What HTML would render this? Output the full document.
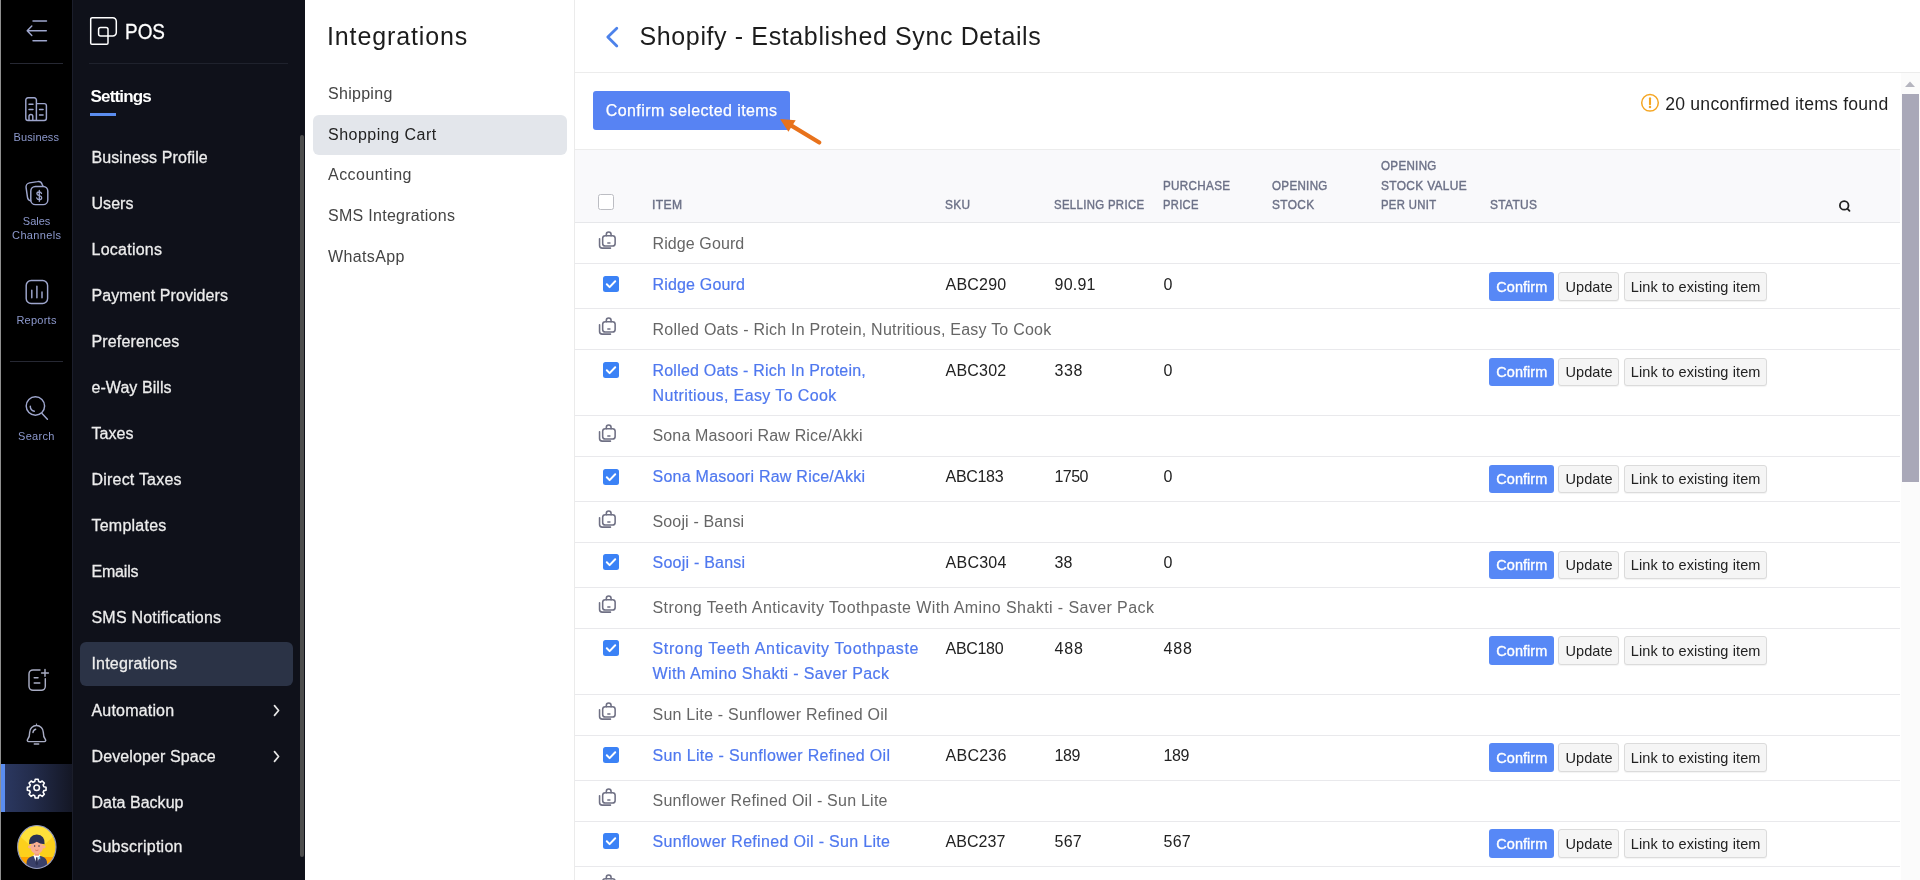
<!DOCTYPE html>
<html lang="en"><head><meta charset="utf-8"><title>Shopify - Established Sync Details</title>
<style>
*{box-sizing:border-box;margin:0;padding:0}
html,body{width:1920px;height:880px;overflow:hidden;background:#fff}
body{font-family:"Liberation Sans",sans-serif;position:relative;color:#222;will-change:transform}
.t{position:absolute;white-space:nowrap;display:block}
.abs{position:absolute}
#rail{position:absolute;left:0;top:0;width:72px;height:880px;background:#000}
#side{position:absolute;left:72px;top:0;width:233px;height:880px;background:#0f111a;border-left:1px solid #1b1e2b}
#panel{position:absolute;left:305px;top:0;width:270px;height:880px;background:#fff;border-right:1px solid #ebebeb}
#main{position:absolute;left:575px;top:0;width:1345px;height:880px;background:#fff}
.hl{position:absolute;height:1px;background:#ececec}
svg{position:absolute;overflow:visible}
.btn{position:absolute;border-radius:3px}
.btn.g{background:#f5f5f5;border:1px solid #dbdbdb;box-shadow:0 1px 1px rgba(0,0,0,.05)}

</style></head>
<body>
<div id="rail"></div>
<div id="side"></div>
<div id="panel"></div>
<div id="main"></div>
<div class="abs" style="left:0;top:0;width:1px;height:880px;background:#8f8f8f"></div>
<svg style="left:0;top:0" width="72" height="72" viewBox="0 0 72 72" fill="none" stroke="#9ea6cd" stroke-width="1.45" stroke-linecap="round" stroke-linejoin="round"><path d="M33 21h13.5M27.3 30.8h19M33 40.7h13.5M31.8 26l-4.6 4.8 4.6 4.8"/></svg>
<div class="abs" style="left:10px;top:63px;width:53px;height:1px;background:#262833"></div>
<svg style="left:0;top:80px" width="72" height="72" viewBox="0 0 72 72" fill="none" stroke="#9ea6cd" stroke-width="1.45" stroke-linecap="round" stroke-linejoin="round"><path d="M25.8 38.2v-18.2a2.2 2.2 0 0 1 2.2 -2.2h6.2a2.2 2.2 0 0 1 2.2 2.2v20.4M36.4 23.6h7.8a2.2 2.2 0 0 1 2.2 2.2v12.4a2.2 2.2 0 0 1 -2.2 2.2h-16.2a2.2 2.2 0 0 1 -2.2 -2.2M29 24.2h4M29 29.5h4M39.5 29.5h3.6M39.5 35h3.6M29 40v-3.6a1.9 1.9 0 0 1 3.8 0v3.6"/></svg>
<span class="t " style="letter-spacing:0.123px;left:13.50px;top:130.25px;font-size:11px;line-height:14px;color:#8c98cc;">Business</span>
<svg style="left:0;top:168px" width="72" height="72" viewBox="0 0 72 72" fill="none" stroke="#9ea6cd" stroke-width="1.45" stroke-linecap="round" stroke-linejoin="round"><rect x="30.8" y="18.4" width="17" height="18.2" rx="4.6"/><path d="M43 18.2l-.9-2a4 4 0 0 0 -4.6 -2.6l-8 1.3a4.2 4.2 0 0 0 -3.4 4.8l1.4 9.6a4.4 4.4 0 0 0 3.2 3.6"/><path stroke-width="1.3" d="M41.500 25.500c-.3-1-1.200-1.500-2.300-1.500-1.300 0-2.300.7-2.300 1.800 0 2.500 4.800 1.300 4.800 3.900 0 1.200-1.100 1.900-2.400 1.900-1.300 0-2.300-.6-2.600-1.700M39.300 22.300v11"/></svg>
<span class="t " style="letter-spacing:-0.008px;left:22.80px;top:214.25px;font-size:11px;line-height:14px;color:#8c98cc;">Sales</span>
<span class="t " style="letter-spacing:0.359px;left:12.10px;top:228.25px;font-size:11px;line-height:14px;color:#8c98cc;">Channels</span>
<svg style="left:0;top:268px" width="72" height="72" viewBox="0 0 72 72" fill="none" stroke="#9ea6cd" stroke-width="1.45" stroke-linecap="round" stroke-linejoin="round"><rect x="26.2" y="12.5" width="21.4" height="23" rx="5"/><path d="M31.8 22.3v7.4M36.9 18.2v11.5M42 24v5.7"/></svg>
<span class="t " style="letter-spacing:0.245px;left:16.40px;top:313.25px;font-size:11px;line-height:14px;color:#8c98cc;">Reports</span>
<div class="abs" style="left:10px;top:361px;width:53px;height:1px;background:#262833"></div>
<svg style="left:0;top:380px" width="72" height="72" viewBox="0 0 72 72" fill="none" stroke="#9ea6cd" stroke-width="1.45" stroke-linecap="round" stroke-linejoin="round"><circle cx="35.4" cy="26" r="9.2"/><path d="M42 33.6l5.4 5.6M30.3 26.2a5 5 0 0 0 4 5"/></svg>
<span class="t " style="letter-spacing:0.288px;left:18.10px;top:429.25px;font-size:11px;line-height:14px;color:#8c98cc;">Search</span>
<svg style="left:0;top:650px" width="72" height="60" viewBox="0 0 72 60" fill="none" stroke="#a9adc4" stroke-width="1.45" stroke-linecap="round" stroke-linejoin="round"><path d="M40 19.9h-7a4 4 0 0 0 -4 4v12.4a4 4 0 0 0 4 4h8.300a4 4 0 0 0 4 -4v-7.500M45 19.500v6.800M41.600 22.900h6.800M34.200 27.700h3.800M34.200 33h5.600"/></svg>
<svg style="left:0;top:710px" width="72" height="50" viewBox="0 0 72 50" fill="none" stroke="#a9adc4" stroke-width="1.45" stroke-linecap="round" stroke-linejoin="round"><path d="M36.500 14.200a1.200 1.200 0 0 1 0 .1M36.500 15.500a6.800 6.800 0 0 0 -6.800 6.800c0 4.200 -.9 5.700 -2 6.900c-.9 1 -.3 2.400 1 2.400h15.600c1.300 0 1.900 -1.400 1 -2.400c-1.100 -1.200 -2 -2.700 -2 -6.900a6.800 6.800 0 0 0 -6.800 -6.800zM34.300 33.900h4.400M33 22.500a3.600 3.600 0 0 1 2.700 -3.300"/></svg>
<div class="abs" style="left:1px;top:764px;width:71px;height:48px;background:linear-gradient(90deg,#2c3963 0%,#232c4b 45%,#141725 100%)"></div>
<div class="abs" style="left:1px;top:764px;width:4px;height:48px;background:#5b8def"></div>
<svg style="left:26px;top:776.700px" width="21.400" height="21.400" viewBox="0 0 24 24" fill="none" stroke="#fff" stroke-width="1.75" stroke-linecap="round" stroke-linejoin="round"><circle cx="12" cy="12" r="3.100"/><path d="M10.300 2.600h3.400l.5 2.500 1.900 .8 2.100 -1.400 2.400 2.400 -1.400 2.100 .8 1.900 2.500 .5v3.400l-2.500 .5 -.8 1.900 1.400 2.100 -2.400 2.400 -2.100 -1.400 -1.900 .8 -.5 2.500h-3.400l-.5 -2.500 -1.900 -.8 -2.100 1.400 -2.400 -2.400 1.400 -2.100 -.8 -1.900 -2.500 -.5v-3.400l2.500 -.5 .8 -1.900 -1.400 -2.100 2.400 -2.400 2.100 1.400 1.900 -.8z"/></svg>
<svg style="left:16.500px;top:825px" width="39.600" height="44" viewBox="0 0 39.600 44">
<defs><clipPath id="av"><ellipse cx="19.800" cy="22" rx="19.200" ry="21.500"/></clipPath></defs>
<g clip-path="url(#av)"><rect width="40" height="44" fill="#fcd01c"/>
<path d="M-1 7.500L12 19.500h15.500L40.500 7.500V-1H-1z" fill="#ffe13a"/>
<rect y="32" width="40" height="12" fill="#ffa300"/>
<path d="M9.500 44v-5.500q0 -5.500 5 -7l2.500 -.8h5.600l2.500 .8q5 1.500 5 7v5.500z" fill="#3a4069"/>
<path d="M16.300 30.200l3.500 8.500 3.500 -8.500 -1.500 -1h-4z" fill="#fff"/>
<path d="M21 33l2 -2.500 .3 4z" fill="#7ec8e8"/>
<path d="M19.100 32.300h1.400l.6 6.500 -1.300 2 -1.300 -2z" fill="#2c3154"/>
<rect x="17.600" y="26.500" width="4.400" height="4.200" fill="#f0987c"/>
<ellipse cx="19.800" cy="22" rx="6.300" ry="7" fill="#f8ae92"/>
<circle cx="12.600" cy="21.800" r="1.600" fill="#f8ae92"/><circle cx="27" cy="21.800" r="1.600" fill="#f8ae92"/>
<path d="M12 19.300q-.6 -9.600 7.800 -9.900q8.400 .3 7.800 9.900q-5 -.3 -7.800 -2.600q-2.800 2.300 -7.800 2.600z" fill="#2a3052"/>
<circle cx="17.600" cy="21" r=".75" fill="#2a3052"/><circle cx="22" cy="21" r=".75" fill="#2a3052"/>
<path d="M18.200 25q1.600 1.200 3.200 0" stroke="#d9694f" stroke-width=".7" fill="none"/></g>
<ellipse cx="19.800" cy="22" rx="19.200" ry="21.500" fill="none" stroke="#8e97c0" stroke-width="1.100"/></svg>
<svg style="left:90px;top:17px" width="27" height="28" viewBox="0 0 27 28" fill="none" stroke="#fff" stroke-width="1.5" stroke-linejoin="round"><path d="M0.700 2.200a1.500 1.500 0 0 1 1.500 -1.500h20.600a3.500 3.500 0 0 1 3.500 3.500v11.300a3.500 3.500 0 0 1 -3.500 3.500h-4.800v7a1.300 1.300 0 0 1 -1.300 1.300h-14.700a1.300 1.300 0 0 1 -1.300 -1.300z"/><path d="M8.600 12.400a2 2 0 0 1 2 -2h5.400a2 2 0 0 1 2 2v6.600h-7.400a2 2 0 0 1 -2 -2z"/></svg>
<span class="t " style="transform-origin:0 50%;transform:scaleX(0.8608);left:124.70px;top:17.75px;font-size:22px;line-height:28px;color:#fff;-webkit-text-stroke:0.3px #fff;">POS</span>
<div class="abs" style="left:89px;top:63px;width:199px;height:1px;background:#1f222d"></div>
<span class="t " style="letter-spacing:-0.823px;left:90.50px;top:86.25px;font-size:17px;line-height:21px;color:#fff;font-weight:700;">Settings</span>
<div class="abs" style="left:90px;top:112.5px;width:26px;height:3px;background:#5b8def"></div>
<div class="abs" style="left:80px;top:642px;width:213px;height:44px;border-radius:6px;background:#2b3346"></div>
<span class="t " style="letter-spacing:0.099px;left:91.50px;top:147.75px;font-size:16px;line-height:20px;color:#ededed;-webkit-text-stroke:0.28px #ededed;">Business Profile</span>
<span class="t " style="letter-spacing:0.055px;left:91.50px;top:193.75px;font-size:16px;line-height:20px;color:#ededed;-webkit-text-stroke:0.28px #ededed;">Users</span>
<span class="t " style="letter-spacing:0.250px;left:91.50px;top:239.75px;font-size:16px;line-height:20px;color:#ededed;-webkit-text-stroke:0.28px #ededed;">Locations</span>
<span class="t " style="letter-spacing:0.083px;left:91.50px;top:285.75px;font-size:16px;line-height:20px;color:#ededed;-webkit-text-stroke:0.28px #ededed;">Payment Providers</span>
<span class="t " style="letter-spacing:0.143px;left:91.50px;top:331.75px;font-size:16px;line-height:20px;color:#ededed;-webkit-text-stroke:0.28px #ededed;">Preferences</span>
<span class="t " style="letter-spacing:0.058px;left:91.50px;top:377.75px;font-size:16px;line-height:20px;color:#ededed;-webkit-text-stroke:0.28px #ededed;">e-Way Bills</span>
<span class="t " style="letter-spacing:0.051px;left:91.50px;top:423.75px;font-size:16px;line-height:20px;color:#ededed;-webkit-text-stroke:0.28px #ededed;">Taxes</span>
<span class="t " style="letter-spacing:0.206px;left:91.50px;top:469.75px;font-size:16px;line-height:20px;color:#ededed;-webkit-text-stroke:0.28px #ededed;">Direct Taxes</span>
<span class="t " style="letter-spacing:0.235px;left:91.50px;top:515.75px;font-size:16px;line-height:20px;color:#ededed;-webkit-text-stroke:0.28px #ededed;">Templates</span>
<span class="t " style="letter-spacing:-0.203px;left:91.50px;top:561.75px;font-size:16px;line-height:20px;color:#ededed;-webkit-text-stroke:0.28px #ededed;">Emails</span>
<span class="t " style="letter-spacing:0.202px;left:91.50px;top:607.75px;font-size:16px;line-height:20px;color:#ededed;-webkit-text-stroke:0.28px #ededed;">SMS Notifications</span>
<span class="t " style="letter-spacing:0.172px;left:91.50px;top:653.75px;font-size:16px;line-height:20px;color:#ededed;-webkit-text-stroke:0.28px #ededed;">Integrations</span>
<span class="t " style="letter-spacing:0.185px;left:91.50px;top:700.75px;font-size:16px;line-height:20px;color:#ededed;-webkit-text-stroke:0.28px #ededed;">Automation</span>
<span class="t " style="letter-spacing:0.104px;left:91.50px;top:746.75px;font-size:16px;line-height:20px;color:#ededed;-webkit-text-stroke:0.28px #ededed;">Developer Space</span>
<span class="t " style="letter-spacing:0.039px;left:91.50px;top:792.75px;font-size:16px;line-height:20px;color:#ededed;-webkit-text-stroke:0.28px #ededed;">Data Backup</span>
<span class="t " style="letter-spacing:0.268px;left:91.50px;top:836.75px;font-size:16px;line-height:20px;color:#ededed;-webkit-text-stroke:0.28px #ededed;">Subscription</span>
<div class="abs" style="left:300px;top:135px;width:4px;height:722px;border-radius:2px;background:#4d4d4d"></div>
<span class="t " style="letter-spacing:0.878px;left:327.00px;top:20.75px;font-size:25px;line-height:31px;color:#1c1c1c;">Integrations</span>
<div class="abs" style="left:312.5px;top:114.5px;width:254px;height:40px;border-radius:6px;background:#e3e6eb"></div>
<span class="t " style="letter-spacing:0.288px;left:328.00px;top:83.75px;font-size:16px;line-height:20px;color:#444;">Shipping</span>
<span class="t " style="letter-spacing:0.492px;left:328.00px;top:124.75px;font-size:16px;line-height:20px;color:#222;">Shopping Cart</span>
<span class="t " style="letter-spacing:0.470px;left:328.00px;top:164.75px;font-size:16px;line-height:20px;color:#444;">Accounting</span>
<span class="t " style="letter-spacing:0.284px;left:328.00px;top:205.75px;font-size:16px;line-height:20px;color:#444;">SMS Integrations</span>
<span class="t " style="letter-spacing:0.370px;left:328.00px;top:246.75px;font-size:16px;line-height:20px;color:#444;">WhatsApp</span>
<span class="t " style="letter-spacing:0.623px;left:639.50px;top:20.75px;font-size:25px;line-height:31px;color:#1c1c1c;">Shopify - Established Sync Details</span>
<svg style="left:604px;top:25px" width="18" height="24" viewBox="0 0 18 24" fill="none" stroke="#4d82ea" stroke-width="2.8" stroke-linecap="round" stroke-linejoin="round"><path d="M12.800 3.200L3.800 12l9 9"/></svg>
<div class="hl" style="left:575px;top:72px;width:1345px"></div>
<div class="btn" style="left:593px;top:91px;width:197px;height:39px;background:#5783f3"></div>
<span class="t " style="letter-spacing:0.409px;left:605.75px;top:100.75px;font-size:16px;line-height:20px;color:#fff;-webkit-text-stroke:0.25px #fff;">Confirm selected items</span>
<span class="t " style="letter-spacing:0.235px;left:1665.20px;top:93.25px;font-size:17.6px;line-height:22px;color:#1f1f1f;">20 unconfirmed items found</span>
<svg style="left:775px;top:112px" width="52" height="38" viewBox="0 0 52 38"><path d="M44.300 30.500L16 13.400" stroke="#e8721b" stroke-width="4.200" stroke-linecap="round" fill="none"/><path d="M5.100 6.900l15.600 1.300 -7.300 11.500z" fill="#e8721b"/></svg>
<svg style="left:1640px;top:93px" width="20" height="20" viewBox="0 0 20 20" fill="none"><circle cx="10" cy="9.800" r="8.300" stroke="#f5a623" stroke-width="1.500"/><path d="M10 5.200v6" stroke="#f5a623" stroke-width="2.100" stroke-linecap="round"/><circle cx="10" cy="14.100" r="1.250" fill="#f5a623"/></svg>
<div class="abs" style="left:575px;top:149px;width:1325px;height:74px;background:#f9f9fb;border-top:1px solid #ececec;border-bottom:1px solid #e6e7ea"></div>
<span class="t " style="transform-origin:0 50%;transform:scaleX(1.0107);left:651.90px;top:197.75px;font-size:12px;line-height:15px;color:#6c7187;letter-spacing:0.35px;-webkit-text-stroke:0.4px #6c7187;">ITEM</span>
<span class="t " style="transform-origin:0 50%;transform:scaleX(0.9870);left:945.40px;top:197.75px;font-size:12px;line-height:15px;color:#6c7187;letter-spacing:0.35px;-webkit-text-stroke:0.4px #6c7187;">SKU</span>
<span class="t " style="transform-origin:0 50%;transform:scaleX(0.9491);left:1054.00px;top:197.75px;font-size:12px;line-height:15px;color:#6c7187;letter-spacing:0.35px;-webkit-text-stroke:0.4px #6c7187;">SELLING PRICE</span>
<span class="t " style="transform-origin:0 50%;transform:scaleX(0.9700);left:1163.00px;top:178.75px;font-size:12px;line-height:15px;color:#6c7187;letter-spacing:0.35px;-webkit-text-stroke:0.4px #6c7187;">PURCHASE</span>
<span class="t " style="transform-origin:0 50%;transform:scaleX(0.9314);left:1163.00px;top:197.75px;font-size:12px;line-height:15px;color:#6c7187;letter-spacing:0.35px;-webkit-text-stroke:0.4px #6c7187;">PRICE</span>
<span class="t " style="transform-origin:0 50%;transform:scaleX(0.9637);left:1272.00px;top:178.75px;font-size:12px;line-height:15px;color:#6c7187;letter-spacing:0.35px;-webkit-text-stroke:0.4px #6c7187;">OPENING</span>
<span class="t " style="transform-origin:0 50%;transform:scaleX(0.9889);left:1272.00px;top:197.75px;font-size:12px;line-height:15px;color:#6c7187;letter-spacing:0.35px;-webkit-text-stroke:0.4px #6c7187;">STOCK</span>
<span class="t " style="transform-origin:0 50%;transform:scaleX(0.9637);left:1380.60px;top:158.75px;font-size:12px;line-height:15px;color:#6c7187;letter-spacing:0.35px;-webkit-text-stroke:0.4px #6c7187;">OPENING</span>
<span class="t " style="transform-origin:0 50%;transform:scaleX(0.9910);left:1380.60px;top:178.75px;font-size:12px;line-height:15px;color:#6c7187;letter-spacing:0.35px;-webkit-text-stroke:0.4px #6c7187;">STOCK VALUE</span>
<span class="t " style="transform-origin:0 50%;transform:scaleX(0.9420);left:1380.60px;top:197.75px;font-size:12px;line-height:15px;color:#6c7187;letter-spacing:0.35px;-webkit-text-stroke:0.4px #6c7187;">PER UNIT</span>
<span class="t " style="transform-origin:0 50%;transform:scaleX(0.9943);left:1489.90px;top:197.75px;font-size:12px;line-height:15px;color:#6c7187;letter-spacing:0.35px;-webkit-text-stroke:0.4px #6c7187;">STATUS</span>
<div class="abs" style="left:598px;top:194px;width:16px;height:16px;border:1px solid #bcbdc3;border-radius:2.5px;background:#fff"></div>
<svg style="left:598px;top:231.0px" width="18.700" height="18.700" viewBox="0 0 18 18" fill="none" stroke="#6f7084" stroke-width="1.5" stroke-linecap="round"><rect x="4.5" y="4.5" width="12" height="10" rx="2.5"/><path d="M8 4.5v-1.2a2.3 2.3 0 0 1 4.6 0v1.2"/><path d="M1.5 7.5v6.5a2.5 2.5 0 0 0 2.5 2.5h8"/><path d="M9.5 11.5h2"/></svg>
<span class="t " style="letter-spacing:0.103px;left:652.50px;top:233.75px;font-size:16px;line-height:20px;color:#666;">Ridge Gourd</span>
<div class="hl" style="left:575px;top:263px;width:1325px;background:#e9e9ec"></div>
<svg style="left:603px;top:275.93px" width="16" height="16" viewBox="0 0 16 16"><rect width="16" height="16" rx="2.5" fill="#3b82f6"/><path d="M3.8 8.3l2.8 2.8 5.6-5.8" fill="none" stroke="#fff" stroke-width="2" stroke-linecap="round" stroke-linejoin="round"/></svg>
<span class="t " style="letter-spacing:0.178px;left:652.50px;top:274.75px;font-size:16px;line-height:20px;color:#4f78ef;-webkit-text-stroke:0.2px #4f78ef;">Ridge Gourd</span>
<span class="t " style="letter-spacing:0.201px;left:945.60px;top:274.75px;font-size:16px;line-height:20px;color:#222;">ABC290</span>
<span class="t " style="letter-spacing:0.238px;left:1054.50px;top:274.75px;font-size:16px;line-height:20px;color:#222;">90.91</span>
<span class="t " style="left:1163.50px;top:274.75px;font-size:16px;line-height:20px;color:#222;">0</span>
<div class="btn" style="left:1489px;top:272.13px;width:65px;height:28.5px;background:#5788f6"></div>
<span class="t " style="letter-spacing:0.039px;left:1496.30px;top:278.25px;font-size:14.5px;line-height:18px;color:#fff;-webkit-text-stroke:0.35px #fff;">Confirm</span>
<div class="btn g" style="left:1558.4px;top:272.13px;width:60.3px;height:28.5px"></div>
<span class="t " style="letter-spacing:0.047px;left:1565.60px;top:278.25px;font-size:14.5px;line-height:18px;color:#222;">Update</span>
<div class="btn g" style="left:1624.4px;top:272.13px;width:142.4px;height:28.5px"></div>
<span class="t " style="letter-spacing:0.113px;left:1630.80px;top:278.25px;font-size:14.5px;line-height:18px;color:#222;">Link to existing item</span>
<div class="hl" style="left:575px;top:308px;width:1325px;background:#e9e9ec"></div>
<svg style="left:598px;top:316.85px" width="18.700" height="18.700" viewBox="0 0 18 18" fill="none" stroke="#6f7084" stroke-width="1.5" stroke-linecap="round"><rect x="4.5" y="4.5" width="12" height="10" rx="2.5"/><path d="M8 4.5v-1.2a2.3 2.3 0 0 1 4.6 0v1.2"/><path d="M1.5 7.5v6.5a2.5 2.5 0 0 0 2.5 2.5h8"/><path d="M9.5 11.5h2"/></svg>
<span class="t " style="letter-spacing:0.225px;left:652.50px;top:319.75px;font-size:16px;line-height:20px;color:#666;">Rolled Oats - Rich In Protein, Nutritious, Easy To Cook</span>
<div class="hl" style="left:575px;top:349px;width:1325px;background:#e9e9ec"></div>
<svg style="left:603px;top:361.77px" width="16" height="16" viewBox="0 0 16 16"><rect width="16" height="16" rx="2.5" fill="#3b82f6"/><path d="M3.8 8.3l2.8 2.8 5.6-5.8" fill="none" stroke="#fff" stroke-width="2" stroke-linecap="round" stroke-linejoin="round"/></svg>
<span class="t " style="letter-spacing:0.209px;left:652.50px;top:360.75px;font-size:16px;line-height:20px;color:#4f78ef;-webkit-text-stroke:0.2px #4f78ef;">Rolled Oats - Rich In Protein,</span>
<span class="t " style="letter-spacing:0.385px;left:652.50px;top:385.75px;font-size:16px;line-height:20px;color:#4f78ef;-webkit-text-stroke:0.2px #4f78ef;">Nutritious, Easy To Cook</span>
<span class="t " style="letter-spacing:0.201px;left:945.60px;top:360.75px;font-size:16px;line-height:20px;color:#222;">ABC302</span>
<span class="t " style="letter-spacing:0.648px;left:1054.50px;top:360.75px;font-size:16px;line-height:20px;color:#222;">338</span>
<span class="t " style="left:1163.50px;top:360.75px;font-size:16px;line-height:20px;color:#222;">0</span>
<div class="btn" style="left:1489px;top:357.97px;width:65px;height:28.5px;background:#5788f6"></div>
<span class="t " style="letter-spacing:0.039px;left:1496.30px;top:363.25px;font-size:14.5px;line-height:18px;color:#fff;-webkit-text-stroke:0.35px #fff;">Confirm</span>
<div class="btn g" style="left:1558.4px;top:357.97px;width:60.3px;height:28.5px"></div>
<span class="t " style="letter-spacing:0.047px;left:1565.60px;top:363.25px;font-size:14.5px;line-height:18px;color:#222;">Update</span>
<div class="btn g" style="left:1624.4px;top:357.97px;width:142.4px;height:28.5px"></div>
<span class="t " style="letter-spacing:0.113px;left:1630.80px;top:363.25px;font-size:14.5px;line-height:18px;color:#222;">Link to existing item</span>
<div class="hl" style="left:575px;top:415px;width:1325px;background:#e9e9ec"></div>
<svg style="left:598px;top:423.65px" width="18.700" height="18.700" viewBox="0 0 18 18" fill="none" stroke="#6f7084" stroke-width="1.5" stroke-linecap="round"><rect x="4.5" y="4.5" width="12" height="10" rx="2.5"/><path d="M8 4.5v-1.2a2.3 2.3 0 0 1 4.6 0v1.2"/><path d="M1.5 7.5v6.5a2.5 2.5 0 0 0 2.5 2.5h8"/><path d="M9.5 11.5h2"/></svg>
<span class="t " style="letter-spacing:0.148px;left:652.50px;top:425.75px;font-size:16px;line-height:20px;color:#666;">Sona Masoori Raw Rice/Akki</span>
<div class="hl" style="left:575px;top:456px;width:1325px;background:#e9e9ec"></div>
<svg style="left:603px;top:468.58px" width="16" height="16" viewBox="0 0 16 16"><rect width="16" height="16" rx="2.5" fill="#3b82f6"/><path d="M3.8 8.3l2.8 2.8 5.6-5.8" fill="none" stroke="#fff" stroke-width="2" stroke-linecap="round" stroke-linejoin="round"/></svg>
<span class="t " style="letter-spacing:0.248px;left:652.50px;top:466.75px;font-size:16px;line-height:20px;color:#4f78ef;-webkit-text-stroke:0.2px #4f78ef;">Sona Masoori Raw Rice/Akki</span>
<span class="t " style="letter-spacing:-0.319px;left:945.60px;top:466.75px;font-size:16px;line-height:20px;color:#222;">ABC183</span>
<span class="t " style="letter-spacing:-0.531px;left:1054.50px;top:466.75px;font-size:16px;line-height:20px;color:#222;">1750</span>
<span class="t " style="left:1163.50px;top:466.75px;font-size:16px;line-height:20px;color:#222;">0</span>
<div class="btn" style="left:1489px;top:464.78px;width:65px;height:28.5px;background:#5788f6"></div>
<span class="t " style="letter-spacing:0.039px;left:1496.30px;top:470.25px;font-size:14.5px;line-height:18px;color:#fff;-webkit-text-stroke:0.35px #fff;">Confirm</span>
<div class="btn g" style="left:1558.4px;top:464.78px;width:60.3px;height:28.5px"></div>
<span class="t " style="letter-spacing:0.047px;left:1565.60px;top:470.25px;font-size:14.5px;line-height:18px;color:#222;">Update</span>
<div class="btn g" style="left:1624.4px;top:464.78px;width:142.4px;height:28.5px"></div>
<span class="t " style="letter-spacing:0.113px;left:1630.80px;top:470.25px;font-size:14.5px;line-height:18px;color:#222;">Link to existing item</span>
<div class="hl" style="left:575px;top:501px;width:1325px;background:#e9e9ec"></div>
<svg style="left:598px;top:509.5px" width="18.700" height="18.700" viewBox="0 0 18 18" fill="none" stroke="#6f7084" stroke-width="1.5" stroke-linecap="round"><rect x="4.5" y="4.5" width="12" height="10" rx="2.5"/><path d="M8 4.5v-1.2a2.3 2.3 0 0 1 4.6 0v1.2"/><path d="M1.5 7.5v6.5a2.5 2.5 0 0 0 2.5 2.5h8"/><path d="M9.5 11.5h2"/></svg>
<span class="t " style="letter-spacing:0.148px;left:652.50px;top:511.75px;font-size:16px;line-height:20px;color:#666;">Sooji - Bansi</span>
<div class="hl" style="left:575px;top:542px;width:1325px;background:#e9e9ec"></div>
<svg style="left:603px;top:554.42px" width="16" height="16" viewBox="0 0 16 16"><rect width="16" height="16" rx="2.5" fill="#3b82f6"/><path d="M3.8 8.3l2.8 2.8 5.6-5.8" fill="none" stroke="#fff" stroke-width="2" stroke-linecap="round" stroke-linejoin="round"/></svg>
<span class="t " style="letter-spacing:0.231px;left:652.50px;top:552.75px;font-size:16px;line-height:20px;color:#4f78ef;-webkit-text-stroke:0.2px #4f78ef;">Sooji - Bansi</span>
<span class="t " style="letter-spacing:0.241px;left:945.60px;top:552.75px;font-size:16px;line-height:20px;color:#222;">ABC304</span>
<span class="t " style="letter-spacing:0.203px;left:1054.50px;top:552.75px;font-size:16px;line-height:20px;color:#222;">38</span>
<span class="t " style="left:1163.50px;top:552.75px;font-size:16px;line-height:20px;color:#222;">0</span>
<div class="btn" style="left:1489px;top:550.62px;width:65px;height:28.5px;background:#5788f6"></div>
<span class="t " style="letter-spacing:0.039px;left:1496.30px;top:556.25px;font-size:14.5px;line-height:18px;color:#fff;-webkit-text-stroke:0.35px #fff;">Confirm</span>
<div class="btn g" style="left:1558.4px;top:550.62px;width:60.3px;height:28.5px"></div>
<span class="t " style="letter-spacing:0.047px;left:1565.60px;top:556.25px;font-size:14.5px;line-height:18px;color:#222;">Update</span>
<div class="btn g" style="left:1624.4px;top:550.62px;width:142.4px;height:28.5px"></div>
<span class="t " style="letter-spacing:0.113px;left:1630.80px;top:556.25px;font-size:14.5px;line-height:18px;color:#222;">Link to existing item</span>
<div class="hl" style="left:575px;top:587px;width:1325px;background:#e9e9ec"></div>
<svg style="left:598px;top:595.34px" width="18.700" height="18.700" viewBox="0 0 18 18" fill="none" stroke="#6f7084" stroke-width="1.5" stroke-linecap="round"><rect x="4.5" y="4.5" width="12" height="10" rx="2.5"/><path d="M8 4.5v-1.2a2.3 2.3 0 0 1 4.6 0v1.2"/><path d="M1.5 7.5v6.5a2.5 2.5 0 0 0 2.5 2.5h8"/><path d="M9.5 11.5h2"/></svg>
<span class="t " style="letter-spacing:0.409px;left:652.50px;top:597.75px;font-size:16px;line-height:20px;color:#666;">Strong Teeth Anticavity Toothpaste With Amino Shakti - Saver Pack</span>
<div class="hl" style="left:575px;top:628px;width:1325px;background:#e9e9ec"></div>
<svg style="left:603px;top:640.27px" width="16" height="16" viewBox="0 0 16 16"><rect width="16" height="16" rx="2.5" fill="#3b82f6"/><path d="M3.8 8.3l2.8 2.8 5.6-5.8" fill="none" stroke="#fff" stroke-width="2" stroke-linecap="round" stroke-linejoin="round"/></svg>
<span class="t " style="letter-spacing:0.639px;left:652.50px;top:638.75px;font-size:16px;line-height:20px;color:#4f78ef;-webkit-text-stroke:0.2px #4f78ef;">Strong Teeth Anticavity Toothpaste</span>
<span class="t " style="letter-spacing:0.363px;left:652.50px;top:663.75px;font-size:16px;line-height:20px;color:#4f78ef;-webkit-text-stroke:0.2px #4f78ef;">With Amino Shakti - Saver Pack</span>
<span class="t " style="letter-spacing:-0.319px;left:945.60px;top:638.75px;font-size:16px;line-height:20px;color:#222;">ABC180</span>
<span class="t " style="letter-spacing:0.798px;left:1054.50px;top:638.75px;font-size:16px;line-height:20px;color:#222;">488</span>
<span class="t " style="letter-spacing:0.798px;left:1163.50px;top:638.75px;font-size:16px;line-height:20px;color:#222;">488</span>
<div class="btn" style="left:1489px;top:636.47px;width:65px;height:28.5px;background:#5788f6"></div>
<span class="t " style="letter-spacing:0.039px;left:1496.30px;top:642.25px;font-size:14.5px;line-height:18px;color:#fff;-webkit-text-stroke:0.35px #fff;">Confirm</span>
<div class="btn g" style="left:1558.4px;top:636.47px;width:60.3px;height:28.5px"></div>
<span class="t " style="letter-spacing:0.047px;left:1565.60px;top:642.25px;font-size:14.5px;line-height:18px;color:#222;">Update</span>
<div class="btn g" style="left:1624.4px;top:636.47px;width:142.4px;height:28.5px"></div>
<span class="t " style="letter-spacing:0.113px;left:1630.80px;top:642.25px;font-size:14.5px;line-height:18px;color:#222;">Link to existing item</span>
<div class="hl" style="left:575px;top:694px;width:1325px;background:#e9e9ec"></div>
<svg style="left:598px;top:702.15px" width="18.700" height="18.700" viewBox="0 0 18 18" fill="none" stroke="#6f7084" stroke-width="1.5" stroke-linecap="round"><rect x="4.5" y="4.5" width="12" height="10" rx="2.5"/><path d="M8 4.5v-1.2a2.3 2.3 0 0 1 4.6 0v1.2"/><path d="M1.5 7.5v6.5a2.5 2.5 0 0 0 2.5 2.5h8"/><path d="M9.5 11.5h2"/></svg>
<span class="t " style="letter-spacing:0.236px;left:652.50px;top:704.75px;font-size:16px;line-height:20px;color:#666;">Sun Lite - Sunflower Refined Oil</span>
<div class="hl" style="left:575px;top:735px;width:1325px;background:#e9e9ec"></div>
<svg style="left:603px;top:747.08px" width="16" height="16" viewBox="0 0 16 16"><rect width="16" height="16" rx="2.5" fill="#3b82f6"/><path d="M3.8 8.3l2.8 2.8 5.6-5.8" fill="none" stroke="#fff" stroke-width="2" stroke-linecap="round" stroke-linejoin="round"/></svg>
<span class="t " style="letter-spacing:0.317px;left:652.50px;top:745.75px;font-size:16px;line-height:20px;color:#4f78ef;-webkit-text-stroke:0.2px #4f78ef;">Sun Lite - Sunflower Refined Oil</span>
<span class="t " style="letter-spacing:0.241px;left:945.60px;top:745.75px;font-size:16px;line-height:20px;color:#222;">ABC236</span>
<span class="t " style="letter-spacing:-0.452px;left:1054.50px;top:745.75px;font-size:16px;line-height:20px;color:#222;">189</span>
<span class="t " style="letter-spacing:-0.452px;left:1163.50px;top:745.75px;font-size:16px;line-height:20px;color:#222;">189</span>
<div class="btn" style="left:1489px;top:743.28px;width:65px;height:28.5px;background:#5788f6"></div>
<span class="t " style="letter-spacing:0.039px;left:1496.30px;top:749.25px;font-size:14.5px;line-height:18px;color:#fff;-webkit-text-stroke:0.35px #fff;">Confirm</span>
<div class="btn g" style="left:1558.4px;top:743.28px;width:60.3px;height:28.5px"></div>
<span class="t " style="letter-spacing:0.047px;left:1565.60px;top:749.25px;font-size:14.5px;line-height:18px;color:#222;">Update</span>
<div class="btn g" style="left:1624.4px;top:743.28px;width:142.4px;height:28.5px"></div>
<span class="t " style="letter-spacing:0.113px;left:1630.80px;top:749.25px;font-size:14.5px;line-height:18px;color:#222;">Link to existing item</span>
<div class="hl" style="left:575px;top:780px;width:1325px;background:#e9e9ec"></div>
<svg style="left:598px;top:788.0px" width="18.700" height="18.700" viewBox="0 0 18 18" fill="none" stroke="#6f7084" stroke-width="1.5" stroke-linecap="round"><rect x="4.5" y="4.5" width="12" height="10" rx="2.5"/><path d="M8 4.5v-1.2a2.3 2.3 0 0 1 4.6 0v1.2"/><path d="M1.5 7.5v6.5a2.5 2.5 0 0 0 2.5 2.5h8"/><path d="M9.5 11.5h2"/></svg>
<span class="t " style="letter-spacing:0.236px;left:652.50px;top:790.75px;font-size:16px;line-height:20px;color:#666;">Sunflower Refined Oil - Sun Lite</span>
<div class="hl" style="left:575px;top:821px;width:1325px;background:#e9e9ec"></div>
<svg style="left:603px;top:832.92px" width="16" height="16" viewBox="0 0 16 16"><rect width="16" height="16" rx="2.5" fill="#3b82f6"/><path d="M3.8 8.3l2.8 2.8 5.6-5.8" fill="none" stroke="#fff" stroke-width="2" stroke-linecap="round" stroke-linejoin="round"/></svg>
<span class="t " style="letter-spacing:0.317px;left:652.50px;top:831.75px;font-size:16px;line-height:20px;color:#4f78ef;-webkit-text-stroke:0.2px #4f78ef;">Sunflower Refined Oil - Sun Lite</span>
<span class="t " style="letter-spacing:0.041px;left:945.60px;top:831.75px;font-size:16px;line-height:20px;color:#222;">ABC237</span>
<span class="t " style="letter-spacing:0.248px;left:1054.50px;top:831.75px;font-size:16px;line-height:20px;color:#222;">567</span>
<span class="t " style="letter-spacing:0.248px;left:1163.50px;top:831.75px;font-size:16px;line-height:20px;color:#222;">567</span>
<div class="btn" style="left:1489px;top:829.12px;width:65px;height:28.5px;background:#5788f6"></div>
<span class="t " style="letter-spacing:0.039px;left:1496.30px;top:835.25px;font-size:14.5px;line-height:18px;color:#fff;-webkit-text-stroke:0.35px #fff;">Confirm</span>
<div class="btn g" style="left:1558.4px;top:829.12px;width:60.3px;height:28.5px"></div>
<span class="t " style="letter-spacing:0.047px;left:1565.60px;top:835.25px;font-size:14.5px;line-height:18px;color:#222;">Update</span>
<div class="btn g" style="left:1624.4px;top:829.12px;width:142.4px;height:28.5px"></div>
<span class="t " style="letter-spacing:0.113px;left:1630.80px;top:835.25px;font-size:14.5px;line-height:18px;color:#222;">Link to existing item</span>
<div class="hl" style="left:575px;top:866px;width:1325px;background:#e9e9ec"></div>
<svg style="left:598px;top:873.84px" width="18.700" height="18.700" viewBox="0 0 18 18" fill="none" stroke="#6f7084" stroke-width="1.5" stroke-linecap="round"><rect x="4.5" y="4.5" width="12" height="10" rx="2.5"/><path d="M8 4.5v-1.2a2.3 2.3 0 0 1 4.6 0v1.2"/><path d="M1.5 7.5v6.5a2.5 2.5 0 0 0 2.5 2.5h8"/><path d="M9.5 11.5h2"/></svg>
<div class="abs" style="left:1901px;top:73px;width:19px;height:807px;background:#fbfbfb"></div>
<div class="abs" style="left:1902px;top:94px;width:17px;height:388px;background:#a9a8b8"></div>
<svg style="left:1905px;top:81px" width="10" height="6" viewBox="0 0 10 6"><path d="M0 6L5 0.5L10 6z" fill="#b5b5bf"/></svg>
<svg style="left:1838px;top:199px" width="14" height="14" viewBox="0 0 14 14" fill="none" stroke="#222" stroke-width="1.800" stroke-linecap="round"><circle cx="6.200" cy="6.400" r="4.300"/><path d="M9.600 9.900l1.900 2"/></svg>
<svg style="left:271px;top:703px" width="12" height="14" viewBox="0 0 12 14" fill="none" stroke="#e6e6e6" stroke-width="1.700" stroke-linecap="round" stroke-linejoin="round"><path d="M3.500 2.600l4.100 4.900 -4.100 4.900"/></svg>
<svg style="left:271px;top:749px" width="12" height="14" viewBox="0 0 12 14" fill="none" stroke="#e6e6e6" stroke-width="1.700" stroke-linecap="round" stroke-linejoin="round"><path d="M3.500 2.600l4.100 4.900 -4.100 4.900"/></svg>
</body></html>
